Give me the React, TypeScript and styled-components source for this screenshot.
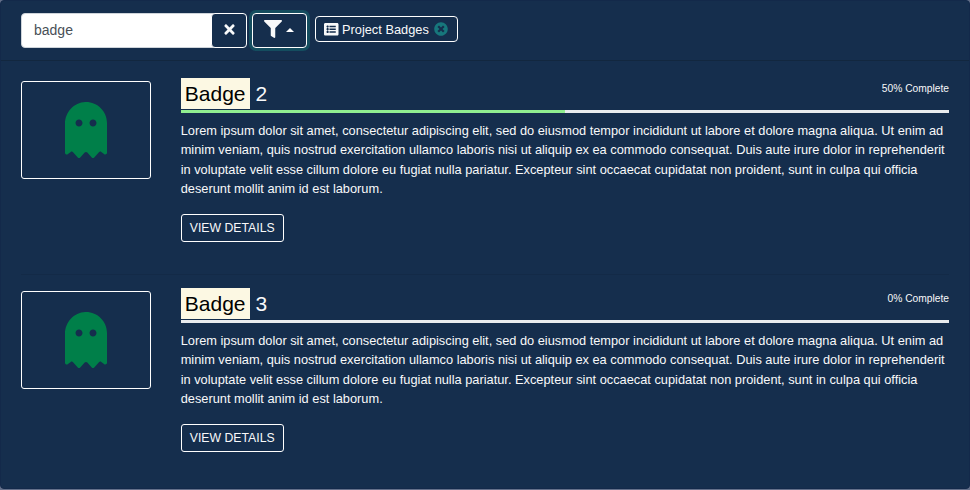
import React from 'react';
import styled, { createGlobalStyle } from 'styled-components';
import { FaFilter, FaGhost, FaListAlt, FaTimes, FaTimesCircle } from 'react-icons/fa';

const GlobalStyle = createGlobalStyle`
  *, *::before, *::after { box-sizing: border-box; }
  html, body, #root { height: 100%; }
  body {
    margin: 0;
    background: #64708a;
    color: #f8f9fa;
    font: 12.8px/19.2px "Liberation Sans", Arial, sans-serif;
    overflow: hidden;
  }
  button { font-family: inherit; color: inherit; background: transparent; cursor: pointer; margin: 0; }
`;

const Card = styled.main`
  height: 489px;
  background: #152e4d;
  border: 1px solid #13294a;
  border-radius: 4px;
`;

const Toolbar = styled.header`
  display: flex;
  height: 60px;
  padding: 12px 20px 0;
  border-bottom: 1px solid #12273f;
`;

const SearchGroup = styled.div`
  display: flex;
  width: 226px;
  height: 35px;
`;

const SearchInput = styled.input`
  width: 194px;
  margin-right: -4px;
  padding: 0 12px 2px;
  border: 1px solid #ced4da;
  border-radius: 4px 0 0 4px;
  background: #fff;
  color: #495057;
  font: 14px "Liberation Sans", Arial, sans-serif;
  outline: none;
`;

const ToolButton = styled.button<{ $width: number; $focused?: boolean }>`
  display: flex;
  align-items: center;
  justify-content: center;
  flex: none;
  width: ${(p) => p.$width}px;
  height: 35px;
  padding: 0 0 2px;
  border: 1px solid #fff;
  border-radius: 4px;
  background: #152e4d;
  box-shadow: ${(p) => (p.$focused ? '0 0 0 3px #144d5f' : 'none')};
`;

const FilterButton = styled(ToolButton)`
  margin-left: 5px;
  padding: 0 1px 4px 0;
`;

const Caret = styled.span`
  margin: 2px 0 0 4px;
  border: 4px solid transparent;
  border-top: 0;
  border-bottom-color: #fff;
`;

const FilterChip = styled.button`
  display: flex;
  align-items: center;
  width: 143px;
  height: 26px;
  margin: 3px 0 0 8px;
  padding: 0 8px;
  border: 1px solid #fff;
  border-radius: 4px;
  font-size: 12.8px;
  white-space: nowrap;

  svg { flex: none; }
`;

const ChipLabel = styled.span`
  margin: 1px 5px 0 3.5px;
`;

const BadgeList = styled.div`
  padding: 0 20px;
`;

const BadgeRow = styled.article`
  display: flex;
  height: 210px;
  padding-top: 16px;
`;

const Divided = styled(BadgeRow)`
  height: 214px;
  padding-top: 20px;
  border-bottom: 1px solid #132a47;
`;

const IconFrame = styled.div`
  display: flex;
  align-items: center;
  justify-content: center;
  flex: none;
  width: 130px;
  height: 98px;
  margin-right: 29.7px;
  padding-right: 0.7px;
  border: 1px solid #fff;
  border-radius: 3px;
  color: #007f49;
`;

const Details = styled.div`
  flex: 1;
  min-width: 0;
`;

const Heading = styled.div`
  display: flex;
  justify-content: space-between;
  height: 32px;
  margin-top: -3px;
`;

const Title = styled.h2`
  display: flex;
  margin: 0;
  font-size: 21px;
  font-weight: 400;
  line-height: 31px;
`;

const Mark = styled.mark`
  height: 31px;
  margin-right: 5.7px;
  padding: 0 4.4px 0 4.1px;
  background: #fcf8e3;
  color: #000;
`;

const Status = styled.span`
  font-size: 10.24px;
  line-height: 22px;
`;

const Progress = styled.div`
  height: 3px;
  background: #e9ecef;
`;

const ProgressBar = styled.div`
  height: 3px;
  background: #90ee90;
`;

const Description = styled.p`
  margin: 8.2px 0 16px;
`;

const ViewButton = styled.button`
  width: 103px;
  height: 28px;
  padding: 0;
  border: 1px solid #fff;
  border-radius: 3px;
  font-size: 12.25px;
  white-space: nowrap;
`;

const LOREM =
  'Lorem ipsum dolor sit amet, consectetur adipiscing elit, sed do eiusmod tempor incididunt ut labore et dolore magna aliqua. Ut enim ad minim veniam, quis nostrud exercitation ullamco laboris nisi ut aliquip ex ea commodo consequat. Duis aute irure dolor in reprehenderit in voluptate velit esse cillum dolore eu fugiat nulla pariatur. Excepteur sint occaecat cupidatat non proident, sunt in culpa qui officia deserunt mollit anim id est laborum.';

const badges = [
  { number: 2, percent: 50 },
  { number: 3, percent: 0 },
];

export default function App() {
  return (
    <>
      <GlobalStyle />
      <Card>
        <Toolbar>
          <SearchGroup>
            <SearchInput defaultValue="badge" aria-label="Search badges" />
            <ToolButton $width={36} aria-label="Clear search">
              <FaTimes size={15} />
            </ToolButton>
          </SearchGroup>
          <FilterButton $width={55} $focused aria-label="Filter">
            <FaFilter size={18} />
            <Caret />
          </FilterButton>
          <FilterChip>
            <FaListAlt size={14.5} />
            <ChipLabel>Project Badges</ChipLabel>
            <FaTimesCircle size={14} color="#17777c" />
          </FilterChip>
        </Toolbar>
        <BadgeList>
          {badges.map((badge, index) => {
            const Row = index < badges.length - 1 ? Divided : BadgeRow;
            return (
              <Row key={badge.number}>
                <IconFrame>
                  <FaGhost size={56} />
                </IconFrame>
                <Details>
                  <Heading>
                    <Title>
                      <Mark>Badge</Mark>
                      {badge.number}
                    </Title>
                    <Status>{badge.percent}% Complete</Status>
                  </Heading>
                  <Progress>
                    <ProgressBar style={{ width: `${badge.percent}%` }} />
                  </Progress>
                  <Description>{LOREM}</Description>
                  <ViewButton>VIEW DETAILS</ViewButton>
                </Details>
              </Row>
            );
          })}
        </BadgeList>
      </Card>
    </>
  );
}
